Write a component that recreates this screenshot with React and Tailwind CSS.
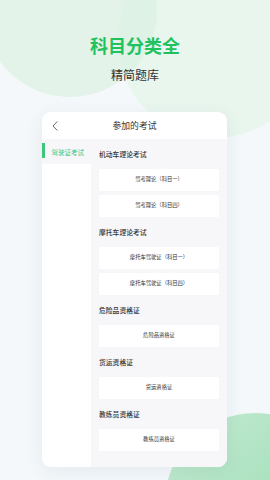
import React from 'react';

const sections = [
  { title: '机动车理论考试', items: ['驾考理论（科目一）', '驾考理论（科目四）'] },
  { title: '摩托车理论考试', items: ['摩托车驾驶证（科目一）', '摩托车驾驶证（科目四）'] },
  { title: '危险品资格证', items: ['危险品资格证'] },
  { title: '货运资格证', items: ['货运资格证'] },
  { title: '教练员资格证', items: ['教练员资格证'] },
];

function ExamSection({ title, items }) {
  return (
    <div className="mb-[10px]">
      <div className="h-[10px] leading-[10px] text-[6.8px] font-medium text-[#333]">{title}</div>
      <div className="mt-[10px] flex flex-col gap-[4px]">
        {items.map((item) => (
          <div
            key={item}
            className="h-[22px] bg-white rounded-[2px] flex items-center justify-center text-[5.3px] text-[#333]"
          >
            {item}
          </div>
        ))}
      </div>
    </div>
  );
}

export default function App() {
  return (
    <div
      className="relative w-[270px] h-[480px] overflow-hidden bg-[#f4f8fb]"
      style={{ fontFamily: '"Noto Sans CJK SC", "Noto Sans", sans-serif' }}
    >
      {/* background blobs */}
      <div className="absolute left-[117px] top-[-58px] w-[196px] h-[196px] rounded-full bg-[#e8f6ee]" />
      <div className="absolute left-[-17px] top-[-77px] w-[174px] h-[174px] rounded-full bg-[#dcf1e3] opacity-70" />
      <div className="absolute left-[165px] top-[413px] w-[180px] h-[180px] rounded-full bg-gradient-to-br from-[#c6ecd3] to-[#8cd7ab]" />

      <div className="relative z-10">
        <div className="pt-[33px] flex flex-col items-center">
          <div className="h-[24px] leading-[24px] text-[18px] font-bold text-[#21c25e]">科目分类全</div>
          <div className="mt-[10px] h-[16px] leading-[16px] text-[12px] text-[#333]">精简题库</div>
        </div>

        <div className="mt-[29px] ml-[42px] w-[185px] h-[355px] rounded-[9px] bg-white overflow-hidden shadow-[0_4px_18px_rgba(40,60,80,0.08)]">
          <div className="h-[27px] grid grid-cols-[30px_1fr_30px] items-center">
            <div className="pl-[10px] flex items-center">
              <svg width="6" height="10" viewBox="0 0 6 10" fill="none">
                <path d="M5 0.8 L1 5 L5 9.2" stroke="#555" strokeWidth="0.9" strokeLinecap="round" strokeLinejoin="round" />
              </svg>
            </div>
            <div className="text-center text-[8.8px] text-[#333]">参加的考试</div>
            <div />
          </div>

          <div className="flex h-[328px]">
            <div className="w-[49px] bg-white">
              <div className="h-[25px] bg-[#f7f7f9] flex items-start">
                <div className="mt-[4px] w-[2.5px] h-[15px] bg-[#3fc57c]" />
                <div className="ml-[7px] mt-[8px] leading-[10px] text-[6.5px] text-[#3fc57c]">驾驶证考试</div>
              </div>
            </div>
            <div className="flex-1 bg-[#f7f7f9] px-[8px] pt-[10px]">
              {sections.map((s) => (
                <ExamSection key={s.title} title={s.title} items={s.items} />
              ))}
            </div>
          </div>
        </div>
      </div>
    </div>
  );
}
